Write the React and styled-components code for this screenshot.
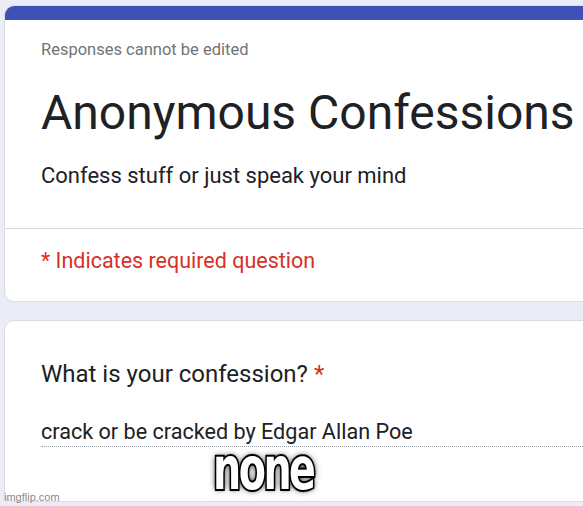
import styled, { createGlobalStyle } from 'styled-components';

const GlobalStyle = createGlobalStyle`
  html, body {
    margin: 0;
    padding: 0;
    background: #eaedf7;
    overflow: hidden;
  }
  body {
    font-family: Roboto, "Liberation Sans", sans-serif;
  }
`;

export default function App() {
  return (
    <>
      <GlobalStyle />
      <Page>
        <Card>
          <Band />
          <Header>
            <Notice>Responses cannot be edited</Notice>
            <Title>Anonymous Confessions</Title>
            <Description>Confess stuff or just speak your mind</Description>
          </Header>
          <Required>* Indicates required question</Required>
        </Card>
        <Card $grow>
          <Question>
            What is your confession? <Star>*</Star>
          </Question>
          <Answer>crack or be cracked by Edgar Allan Poe</Answer>
        </Card>
      </Page>
      <Caption>none</Caption>
      <Watermark>imgflip.com</Watermark>
    </>
  );
}

const Page = styled.main`
  display: flex;
  flex-direction: column;
  gap: 18px;
  padding: 5px 0 0 4px;
  width: 700px;
  height: 502px;
  box-sizing: border-box;
`;

const Card = styled.section`
  flex: ${(p) => (p.$grow ? '1' : 'none')};
  background: #fff;
  border: 1px solid #dadce0;
  border-radius: 10px;
  overflow: hidden;
`;

const Band = styled.div`
  height: 15px;
  background: #3f51b5;
  margin: -1px -1px 0;
`;

const Header = styled.div`
  padding: 18px 36px 37px;
  border-bottom: 1px solid #dadce0;
`;

const Notice = styled.div`
  font-size: 16.5px;
  line-height: 24px;
  color: #6f7378;
`;

const Title = styled.h1`
  margin: 23px 0 0;
  font-size: 48px;
  font-weight: 400;
  line-height: 56px;
  color: #202124;
`;

const Description = styled.p`
  margin: 20px 0 0;
  font-size: 22px;
  line-height: 30px;
  color: #202124;
`;

const Required = styled.div`
  padding: 18px 36px 26px;
  font-size: 21.5px;
  line-height: 28px;
  color: #d93025;
`;

const Question = styled.div`
  padding: 37px 36px 0;
  font-size: 24px;
  line-height: 32px;
  color: #202124;
`;

const Star = styled.span`
  color: #d93025;
`;

const Answer = styled.div`
  margin: 28px 0 0 36px;
  font-size: 21.6px;
  line-height: 28px;
  color: #202124;
  border-bottom: 1px dotted #9aa0a6;
`;

// meme caption laid over the form
const Caption = styled.div`
  position: absolute;
  left: 213px;
  top: 442px;
  font-family: "DejaVu Sans Condensed", "DejaVu Sans", sans-serif;
  font-weight: bold;
  font-size: 44px;
  line-height: 40px;
  letter-spacing: -2.5px;
  color: #fff;
  transform: scaleY(1.35);
  transform-origin: top left;
  -webkit-text-stroke: 3px #000;
  paint-order: stroke fill;
  text-shadow: 0 0 3px #000, 0 0 6px rgba(0, 0, 0, 0.8);
`;

const Watermark = styled.div`
  position: absolute;
  left: 4px;
  top: 491px;
  font-family: "Liberation Sans", Arial, sans-serif;
  font-size: 11px;
  color: #8a8a8a;
`;
